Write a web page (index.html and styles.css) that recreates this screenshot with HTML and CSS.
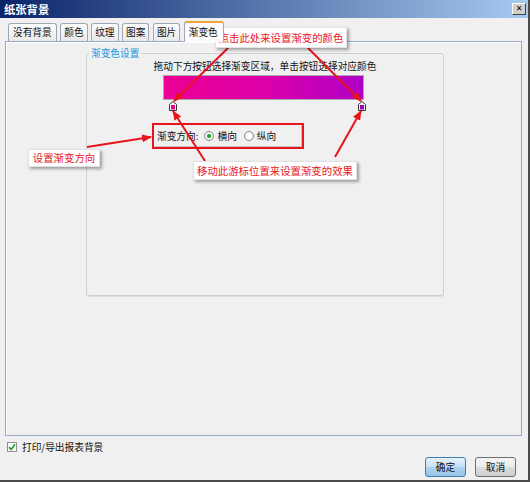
FILE: index.html
```html
<!DOCTYPE html>
<html lang="zh-CN">
<head>
<meta charset="utf-8">
<title>纸张背景</title>
<link rel="stylesheet" href="styles.css">
</head>
<body>
<div class="window">
  <div class="titlebar">
    <span class="title">纸张背景</span>
    <span class="close">✕</span>
  </div>
  <div class="tabs">
    <div class="tab">没有背景</div>
    <div class="tab">颜色</div>
    <div class="tab">纹理</div>
    <div class="tab">图案</div>
    <div class="tab">图片</div>
    <div class="tab active">渐变色</div>
  </div>
  <div class="panel">
    <fieldset class="group">
      <legend class="legend">渐变色设置</legend>
      <div class="hint">拖动下方按钮选择渐变区域，单击按钮选择对应颜色</div>
      <div class="bar"></div>
      <div class="handles">
        <svg class="handle" width="8" height="10" viewBox="0 0 8 10"><path d="M0.5 9.5V3.5L4 0.5L7.5 3.5V9.5Z" fill="#fff" stroke="#333"/><rect x="2" y="4" width="4" height="4.5" fill="#e8008f"/></svg>
        <svg class="handle" width="8" height="10" viewBox="0 0 8 10"><path d="M0.5 9.5V3.5L4 0.5L7.5 3.5V9.5Z" fill="#fff" stroke="#333"/><rect x="2" y="4" width="4" height="4.5" fill="#a400bc"/></svg>
      </div>
      <div class="direction">
        <span class="dir-label">渐变方向:</span>
        <span class="radio checked"><span class="dot"></span>横向</span>
        <span class="radio"><span class="dot"></span>纵向</span>
      </div>
    </fieldset>
  </div>
  <div class="footer">
    <div class="check">
      <span class="box"><svg width="8" height="8" viewBox="0 0 8 8"><path d="M1 4.2L3.2 6.4L7 1.3" fill="none" stroke="#1f9e27" stroke-width="1.7"/></svg></span>
      <span>打印/导出报表背景</span>
    </div>
    <div class="buttons">
      <button class="btn default">确定</button>
      <button class="btn">取消</button>
    </div>
  </div>

  <svg class="arrows" width="530" height="482" viewBox="0 0 530 482">
    <defs>
      <marker id="ah" markerWidth="10" markerHeight="8" refX="9" refY="4" orient="auto" markerUnits="userSpaceOnUse">
        <path d="M0 0L10 4L0 8Z" fill="#e8141c"/>
      </marker>
    </defs>
    <g stroke="#e8141c" stroke-width="2" fill="none" marker-end="url(#ah)">
      <path d="M87 147L151 137"/>
      <path d="M228 48L174 101"/>
      <path d="M308 48L361 101"/>
      <path d="M205 161L173 111"/>
      <path d="M335 157L361 111"/>
    </g>
  </svg>
  <div class="callout c1">点击此处来设置渐变的颜色</div>
  <div class="callout c2">设置渐变方向</div>
  <div class="callout c3">移动此游标位置来设置渐变的效果</div>
</div>
</body>
</html>
```
FILE: styles.css
```css
* { box-sizing: border-box; }
html, body { margin: 0; padding: 0; }
body {
  width: 530px;
  height: 482px;
  overflow: hidden;
  background: #f0f0f0;
  font-family: "Noto Sans CJK SC", "Noto Sans", sans-serif;
}
.window {
  position: relative;
  width: 530px;
  height: 482px;
  background: #f0f0f0;
  border-right: 2px solid #4a4a4a;
  border-bottom: 2px solid #4a4a4a;
  display: flex;
  flex-direction: column;
  font-size: 9.7px;
  color: #111;
}
.titlebar {
  height: 18px;
  background: linear-gradient(to right, #0a246a, #a6caf0);
  display: flex;
  align-items: center;
  justify-content: space-between;
  padding: 0 2px 0 4px;
}
.title {
  color: #fff;
  font-weight: bold;
  font-size: 11.3px;
  line-height: 14px;
}
.close {
  width: 14px;
  height: 12px;
  background: #d4d0c8;
  border: 1px solid;
  border-color: #fff #404040 #404040 #fff;
  font-family: "DejaVu Sans", sans-serif;
  font-size: 8px;
  font-weight: bold;
  line-height: 10px;
  text-align: center;
  color: #000;
}
.tabs {
  display: flex;
  align-items: flex-end;
  gap: 3.5px;
  height: 23px;
  padding-left: 8px;
}
.tab {
  height: 18px;
  padding: 0 3px;
  border: 1px solid #9ea7b6;
  border-bottom: none;
  border-radius: 3px 3px 0 0;
  background: linear-gradient(#fdfdfd, #e9e9e9);
  line-height: 17px;
  white-space: nowrap;
}
.tab:first-child { padding: 0 4px; }
.tab.active {
  height: 21px;
  margin-bottom: -1px;
  padding: 0 5.5px 0 4px;
  background: #fbfbfb;
  border-top: 2px solid #f2a33a;
  line-height: 18px;
  position: relative;
  z-index: 1;
}
.panel {
  margin: 0 6px 0 5px;
  height: 395px;
  border: 1px solid #98a8c2;
  box-shadow: inset 1px 1px 0 #fff;
  padding: 5px 0 0 80px;
}
.group {
  margin: 0;
  padding: 0;
  min-width: 0;
  width: 358px;
  height: 249px;
  border: 1px solid #d0d0d0;
  border-radius: 3px;
  box-shadow: 0 1px 0 #dddddd;
}
.legend {
  margin-left: 2px;
  padding: 0 2px;
  color: #1e96dc;
  font-size: 9.7px;
  line-height: 12px;
}
.hint {
  margin-top: 1px;
  line-height: 12px;
  text-align: center;
  white-space: nowrap;
}
.bar {
  margin: 3px 0 0 76px;
  width: 201px;
  height: 25px;
  border: 1px solid #a8a8a8;
  background: linear-gradient(to right, #ec0094, #dc00aa 50%, #b000c6);
}
.handles {
  margin: 1px 0 0 82px;
  width: 197px;
  height: 10px;
  display: flex;
  justify-content: space-between;
}
.handle { display: block; }
.direction {
  margin: 12px 0 0 65px;
  width: 152px;
  height: 26px;
  border: 2px solid #e8141c;
  box-shadow: inset -1px -1px 0 #c4c4c4;
  display: flex;
  align-items: center;
  padding-left: 3px;
  white-space: nowrap;
  line-height: 12px;
}
.dir-label { margin-right: 6px; }
.radio {
  display: flex;
  align-items: center;
  gap: 3px;
  margin-right: 7px;
}
.dot {
  width: 10px;
  height: 10px;
  border-radius: 50%;
  border: 1px solid #8a8a8a;
  background: radial-gradient(circle, #ffffff 40%, #e4e4e4);
  display: flex;
  align-items: center;
  justify-content: center;
}
.radio.checked .dot::after {
  content: "";
  width: 4px;
  height: 4px;
  border-radius: 50%;
  background: #23a12b;
  box-shadow: 0 0 1px #5bd060;
}
.footer {
  display: flex;
  flex-direction: column;
  padding: 0 12px 0 7px;
}
.check {
  margin-top: 5px;
  display: flex;
  align-items: center;
  gap: 5px;
  line-height: 12px;
}
.box {
  width: 10px;
  height: 10px;
  border: 1px solid #8e8f8f;
  background: #fff;
  display: flex;
  align-items: center;
  justify-content: center;
}
.box svg { display: block; }
.buttons {
  margin-top: 4px;
  display: flex;
  justify-content: flex-end;
  gap: 9px;
}
.btn {
  width: 41px;
  height: 20px;
  padding: 0;
  font-family: "Noto Sans CJK SC", "Noto Sans", sans-serif;
  font-size: 9.7px;
  line-height: 12px;
  color: #111;
  border: 1px solid #707070;
  border-radius: 3px;
  background: linear-gradient(#f4f4f4, #ebebeb 50%, #dddddd 51%, #cfcfcf);
}
.btn.default {
  border-color: #3c7fb1;
  background: linear-gradient(#e6f2fa, #c4e0f4 50%, #acd2ee 51%, #98c4e6);
}
.arrows {
  position: absolute;
  left: 0;
  top: 0;
  pointer-events: none;
}
.callout {
  position: absolute;
  background: #fff;
  color: #e8141c;
  font-size: 10.4px;
  line-height: 12px;
  white-space: nowrap;
  display: flex;
  align-items: center;
  justify-content: center;
  border: 1px solid #e2e2e2;
  box-shadow: 2px 2px 3px rgba(0, 0, 0, 0.35);
}
.c1 { left: 215px; top: 27px; width: 132px; height: 21px; }
.c2 { left: 28px; top: 149px; width: 72px; height: 18px; }
.c3 { left: 193px; top: 161px; width: 164px; height: 19px; }
```
